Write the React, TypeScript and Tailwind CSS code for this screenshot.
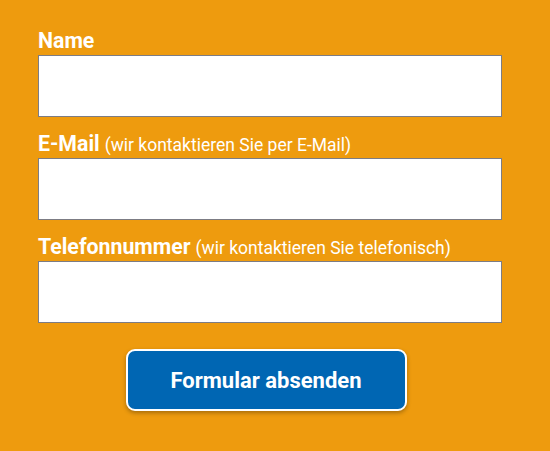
import React from "react";

function Field({ label, hint }: { label: string; hint?: string }) {
  return (
    <div className="flex flex-col">
      <div className="h-[26px] leading-[24px] text-white whitespace-nowrap">
        <span className="text-[21.3px] font-bold">{label}</span>
        {hint && <span className="text-[17.5px] ml-[5px]">{hint}</span>}
      </div>
      <input
        type="text"
        className="h-[62px] w-[464px] bg-white border border-[#7c7c84] outline-none"
      />
    </div>
  );
}

export default function App() {
  return (
    <div
      className="w-[550px] h-[451px] bg-[#ee9b0e] pl-[38px] pt-[29px] flex flex-col"
      style={{ fontFamily: 'Roboto, "Liberation Sans", sans-serif' }}
    >
      <div className="flex flex-col gap-[15px]">
        <Field label="Name" />
        <Field label="E-Mail" hint="(wir kontaktieren Sie per E-Mail)" />
        <Field label="Telefonnummer" hint="(wir kontaktieren Sie telefonisch)" />
      </div>
      <div className="w-[464px] flex justify-center mt-[26px] pr-[8px]">
        <button className="w-[281px] h-[62px] bg-[#0066b3] border-2 border-white rounded-[9px] text-white text-[22px] font-bold shadow-[0_2px_4px_rgba(0,0,0,0.3)]">
          Formular absenden
        </button>
      </div>
    </div>
  );
}
